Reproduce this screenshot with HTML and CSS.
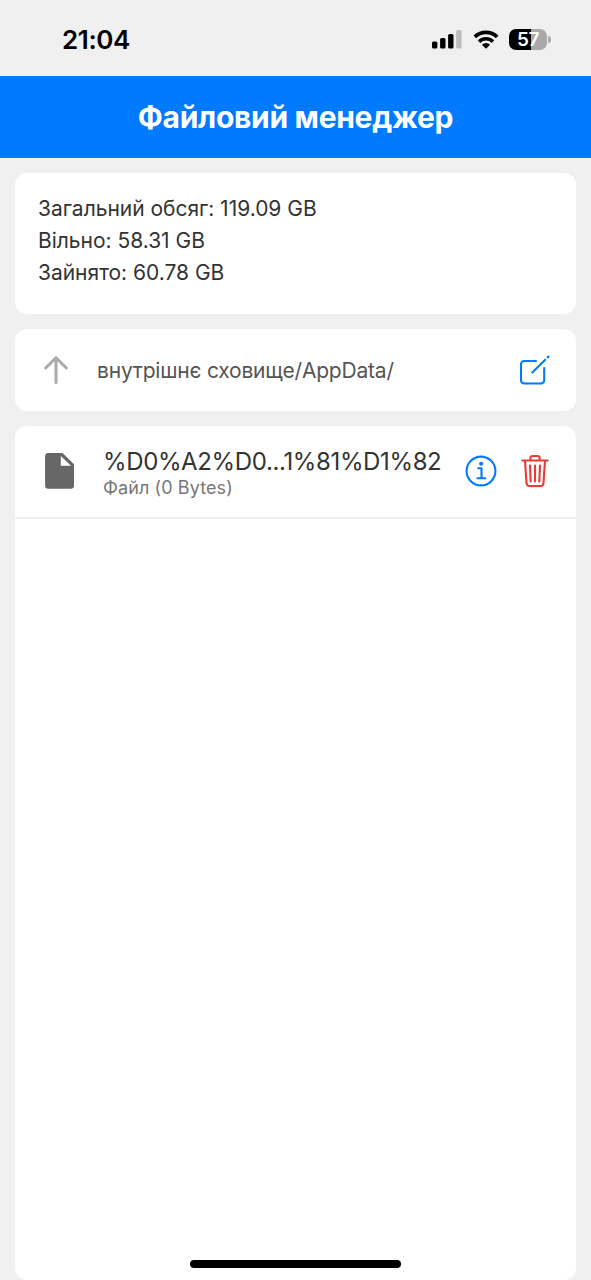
FILE: index.html
```html
<!DOCTYPE html>
<html lang="uk">
<head>
<meta charset="utf-8">
<title>Файловий менеджер</title>
<link rel="stylesheet" href="styles.css">
</head>
<body>
<div class="screen">
  <div class="status">
    <span class="time">21:04</span>
    <div class="indicators">
      <svg class="signal" width="30" height="20" viewBox="0 0 30 20">
        <rect x="0" y="11.5" width="5.4" height="7" rx="1.5"/>
        <rect x="8.1" y="7.9" width="5.4" height="10.6" rx="1.5"/>
        <rect x="16.1" y="3.9" width="5.4" height="14.6" rx="1.5"/>
        <rect x="24.2" y="0" width="5.4" height="18.5" rx="1.5" fill="#bcbcbc"/>
      </svg>
      <svg class="wifi" width="26" height="20" viewBox="0 0 26 20">
        <path d="M1.8 6.9a16 16 0 0 1 22.4 0M6 11.6a10 10 0 0 1 14 0" fill="none" stroke="#000" stroke-width="3.7"/>
        <path d="M13 18.7l-4.1-4a5.8 5.8 0 0 1 8.2 0z"/>
      </svg>
      <div class="battery"><span class="level">57</span></div>
      <span class="cap"></span>
    </div>
  </div>
  <header class="header"><h1 class="title">Файловий менеджер</h1></header>
  <main class="content">
    <section class="card storage">
      <p>Загальний обсяг: 119.09 GB</p>
      <p>Вільно: 58.31 GB</p>
      <p>Зайнято: 60.78 GB</p>
    </section>
    <section class="card pathbar">
      <svg class="up" width="26" height="30" viewBox="0 0 26 30" fill="none" stroke="#aaa" stroke-width="3" stroke-linecap="round" stroke-linejoin="round"><path d="M13 27.5V3M2.7 13L13 2.7 23.3 13"/></svg>
      <span class="path">внутрішнє сховище/AppData/</span>
      <svg class="edit" width="32" height="32" viewBox="0 0 32 32" fill="none" stroke="#007aff" stroke-width="2.1" stroke-linecap="round" stroke-linejoin="round"><path d="M17 7H5.2A3.2 3.2 0 0 0 2 10.2V26.3A3.2 3.2 0 0 0 5.2 29.5H22A3.2 3.2 0 0 0 25.2 26.3V14M13.3 18.5L26.2 5.8"/><path d="M28.9 3.1L29.2 2.8" stroke-width="2.5"/></svg>
    </section>
    <section class="card files">
      <div class="row">
        <svg class="doc" width="30" height="36" viewBox="0 0 30 36"><path fill="#666" fill-rule="evenodd" d="M3.3 0H17.5L29 11.2V32.5A3.2 3.2 0 0 1 25.8 35.7H3.3A3.2 3.2 0 0 1 .1 32.5V3.2A3.2 3.2 0 0 1 3.3 0ZM15.8 3V12.7H26Z"/></svg>
        <div class="info">
          <div class="name">%D0%A2%D0...1%81%D1%82</div>
          <div class="meta">Файл (0 Bytes)</div>
        </div>
        <svg class="about" width="32" height="32" viewBox="0 0 32 32" fill="none" stroke="#007aff" stroke-width="2.1" stroke-linecap="round" stroke-linejoin="round"><circle cx="16" cy="16" r="14.4"/><path stroke-width="2.1" d="M13.200 13.3H16.5V23.2M12.5 23.2H20.3"/><circle cx="16.1" cy="8.8" r="2" fill="#007aff" stroke="none"/></svg>
        <svg class="trash" width="28" height="34" viewBox="0 0 28 34" fill="none" stroke="#ea3a33" stroke-width="2.1" stroke-linecap="round" stroke-linejoin="round"><path d="M1.3 6.5H26.7M4 6.5L5.5 29A3.2 3.2 0 0 0 8.5 32H19.5A3.2 3.2 0 0 0 22.5 29L24 6.5M9.4 6.5V4A2 2 0 0 1 11.4 2H16.6A2 2 0 0 1 18.6 4V6.5M14 11.5V27.5M9 11.5L9.7 27.5M19 11.5L18.3 27.5"/></svg>
      </div>
    </section>
  </main>
  <div class="home"></div>
</div>
</body>
</html>
```

FILE: styles.css
```css
* { box-sizing: border-box; }
body { margin: 0; font-family: Inter, "Liberation Sans", sans-serif; background: #f0f0f0; }
.screen { position: relative; width: 591px; height: 1280px; display: flex; flex-direction: column; overflow: hidden; }
.status { height: 76px; flex: none; display: flex; justify-content: space-between; padding: 24px 40px 0 62px; }
.time { font-size: 26px; line-height: 32px; font-weight: 600; letter-spacing: -0.4px; color: #000; }
.indicators { display: flex; align-items: flex-start; padding-top: 6px; }
.wifi { margin-left: 11px; }
.battery { width: 38px; height: 21px; margin: -1px 0 0 10px; border-radius: 7px; background: linear-gradient(90deg, #000 57%, #a9a9a9 57%); text-align: center; }
.level { display: block; color: #fff; font-size: 19px; line-height: 21px; font-weight: 600; letter-spacing: -0.5px; }
.cap { width: 3px; height: 7px; margin: 6px 0 0 1px; border-radius: 0 4px 4px 0; background: #aaa; }
.header { height: 82px; flex: none; background: #007aff; display: flex; justify-content: center; align-items: center; }
.title { margin: 0; font-size: 30px; line-height: 36px; font-weight: 700; letter-spacing: -0.3px; color: #fff; white-space: nowrap; }
.content { flex: 1; display: flex; flex-direction: column; gap: 15px; padding: 15px 15px 0; }
.card { background: #fff; border-radius: 12px; }
.storage { height: 141px; padding: 20px 23px; font-size: 21px; line-height: 32px; letter-spacing: -0.02px; color: #333; }
.storage p { margin: 0; }
.pathbar { height: 82px; display: flex; align-items: center; padding: 0 25px 0 28px; }
.path { flex: 1; padding-top: 2px; margin-left: 28px; font-size: 21px; line-height: 32px; letter-spacing: -0.2px; color: #555; white-space: nowrap; }
.files { flex: 1; }
.row { height: 93px; border-bottom: 2px solid #eee; display: flex; align-items: center; padding: 0 27px 1px 30px; }
.info { flex: 1; padding-top: 5px; margin-left: 28px; white-space: nowrap; }
.name { font-size: 24px; line-height: 28px; letter-spacing: -0.37px; color: #333; }
.meta { font-size: 18px; line-height: 24px; letter-spacing: 0.1px; color: #777; }
.trash { margin-left: 24px; }
.home { position: absolute; left: 190px; bottom: 12px; width: 211px; height: 8px; border-radius: 4px; background: #000; }
```
